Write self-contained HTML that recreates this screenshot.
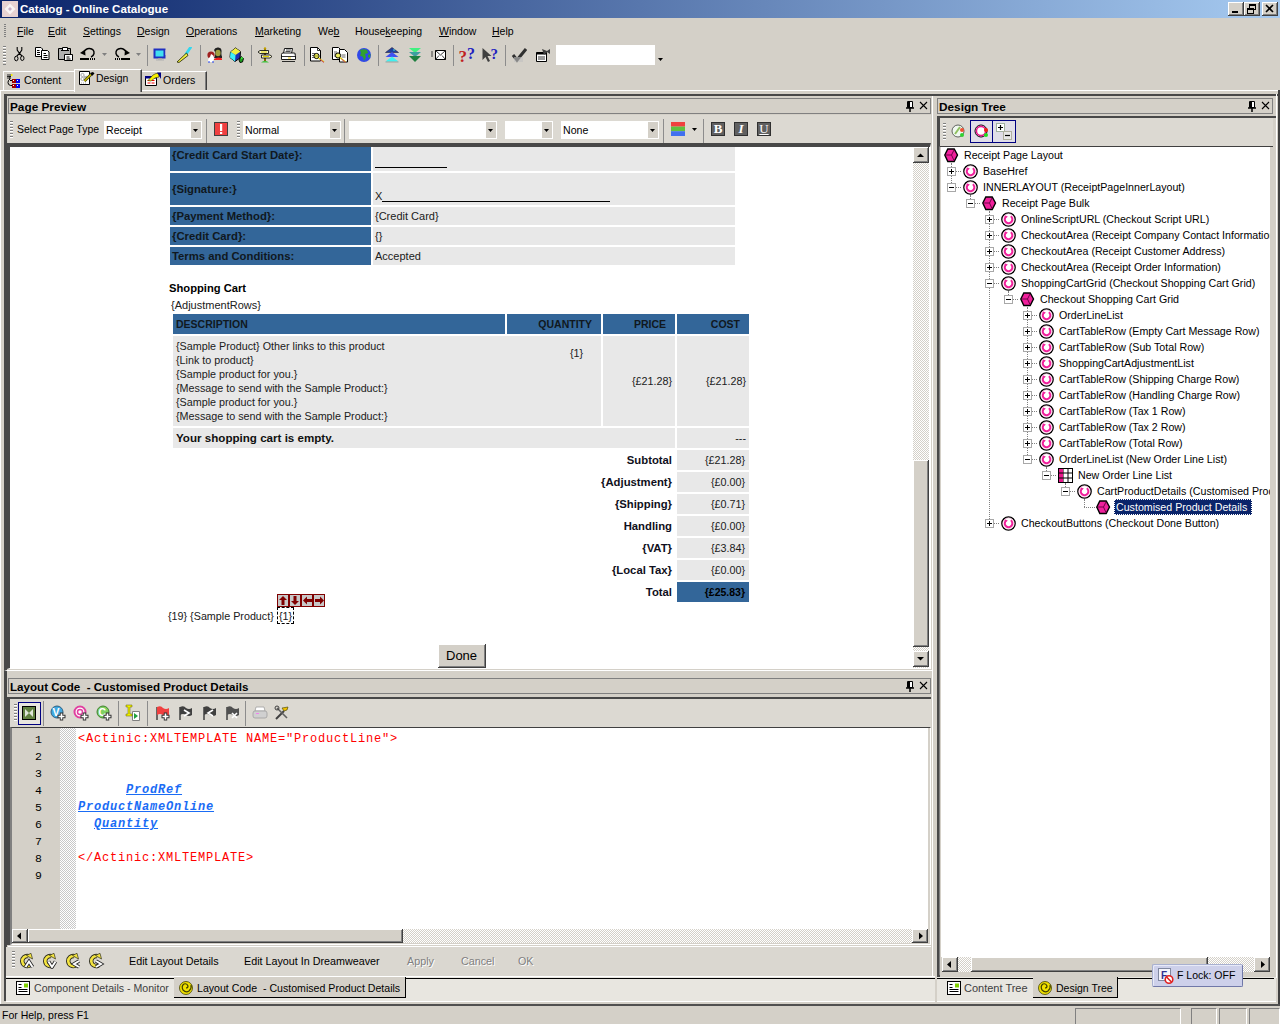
<!DOCTYPE html><html><head><meta charset="utf-8"><style>
html,body{margin:0;padding:0}
body{width:1280px;height:1024px;overflow:hidden;position:relative;background:#D4D0C8;font-family:"Liberation Sans",sans-serif;font-size:11px;color:#000}
div{position:absolute;box-sizing:border-box}
.t{white-space:pre}
u{text-decoration:underline;text-underline-offset:1px;}
.mono{font-family:"Liberation Mono",monospace}
.lk{color:#1A6CF5;font-weight:bold;font-style:italic;text-decoration:underline}
</style></head><body>
<div style="left:0px;top:0px;width:1280px;height:18px;background:linear-gradient(to right,#0A246A,#A6CAF0);"></div><svg style="position:absolute;left:2px;top:1px;" width="16" height="16" viewBox="0 0 16 16"><rect x="0" y="0" width="16" height="16" fill="#E6D2D2"/><path d="M8 2.5 L13.5 8 L8 13.5 L2.5 8Z" fill="#F8F4F4"/><path d="M8 6 L10 8 L8 10 L6 8Z" fill="#C8B0C8"/></svg><div class="t" style="left:20px;top:2px;height:14px;line-height:14px;color:#fff;font-weight:bold;font-size:11.6px;">Catalog - Online Catalogue</div><div style="left:1228px;top:2px;width:16px;height:14px;background:#D4D0C8;box-shadow:inset -1px -1px #404040, inset 1px 1px #FFFFFF, inset -2px -2px #808080, inset 2px 2px #D4D0C8;"><svg style="position:absolute;left:0px;top:0px;" width="16" height="14" viewBox="0 0 16 14"><rect x="4" y="9" width="6" height="2" fill="#000"/></svg></div><div style="left:1244px;top:2px;width:16px;height:14px;background:#D4D0C8;box-shadow:inset -1px -1px #404040, inset 1px 1px #FFFFFF, inset -2px -2px #808080, inset 2px 2px #D4D0C8;"><svg style="position:absolute;left:0px;top:0px;" width="16" height="14" viewBox="0 0 16 14"><rect x="5.5" y="2.5" width="6" height="5" fill="none" stroke="#000"/><rect x="5" y="2" width="7" height="2" fill="#000"/><rect x="3.5" y="6.5" width="6" height="5" fill="#D4D0C8" stroke="#000"/><rect x="3" y="6" width="7" height="2" fill="#000"/></svg></div><div style="left:1262px;top:2px;width:16px;height:14px;background:#D4D0C8;box-shadow:inset -1px -1px #404040, inset 1px 1px #FFFFFF, inset -2px -2px #808080, inset 2px 2px #D4D0C8;"><svg style="position:absolute;left:0px;top:0px;" width="16" height="14" viewBox="0 0 16 14"><path d="M4 3 L11 10 M11 3 L4 10" stroke="#000" stroke-width="1.6"/></svg></div><div style="left:4px;top:24px;width:2px;height:14px;background:repeating-linear-gradient(to bottom,#808080 0 1px,transparent 1px 2px);"></div><div class="t" style="left:17px;top:25px;height:13px;line-height:13px;font-size:10.5px;"><u>F</u>ile</div><div class="t" style="left:48px;top:25px;height:13px;line-height:13px;font-size:10.5px;"><u>E</u>dit</div><div class="t" style="left:83px;top:25px;height:13px;line-height:13px;font-size:10.5px;"><u>S</u>ettings</div><div class="t" style="left:137px;top:25px;height:13px;line-height:13px;font-size:10.5px;"><u>D</u>esign</div><div class="t" style="left:186px;top:25px;height:13px;line-height:13px;font-size:10.5px;"><u>O</u>perations</div><div class="t" style="left:255px;top:25px;height:13px;line-height:13px;font-size:10.5px;"><u>M</u>arketing</div><div class="t" style="left:318px;top:25px;height:13px;line-height:13px;font-size:10.5px;">We<u>b</u></div><div class="t" style="left:355px;top:25px;height:13px;line-height:13px;font-size:10.5px;">House<u>k</u>eeping</div><div class="t" style="left:439px;top:25px;height:13px;line-height:13px;font-size:10.5px;"><u>W</u>indow</div><div class="t" style="left:492px;top:25px;height:13px;line-height:13px;font-size:10.5px;"><u>H</u>elp</div><div style="left:3px;top:46px;width:3px;height:19px;background:repeating-linear-gradient(#808080 0 1px,#fff 1px 2px,#D4D0C8 2px 3px);width:3px"></div><svg style="position:absolute;left:12px;top:47px;" width="16" height="16" viewBox="0 0 16 16"><path d="M5.2 0v3 L7.5 6.5 L4.8 9 M9.8 0v3 L7.5 6.5 L10 9" stroke="#000" stroke-width="1.1" fill="none"/><ellipse cx="4.3" cy="11.5" rx="1.7" ry="2.3" fill="none" stroke="#000" stroke-width="1"/><ellipse cx="10.3" cy="11.2" rx="1.7" ry="2.3" fill="none" stroke="#000" stroke-width="1"/></svg><svg style="position:absolute;left:34px;top:47px;" width="16" height="16" viewBox="0 0 16 16"><path d="M1.5 0.5h5.5l1.5 1.5v7.5h-7z" fill="#fff" stroke="#000"/><path d="M3 3.5h2.5M3 5.5h3M3 7.5h3" stroke="#000"/><path d="M7.5 3.5h6l1.5 1.5v7.5h-7.5z" fill="#fff" stroke="#000"/><path d="M9.5 6.5h2.5M9.5 8.5h4M9.5 10.5h4" stroke="#000"/></svg><svg style="position:absolute;left:57px;top:47px;" width="16" height="16" viewBox="0 0 16 16"><path d="M1.5 1.5h12v11h-12z" fill="#B0B0B0" stroke="#000"/><path d="M5.5 0.5h5v3h-5z" fill="#fff" stroke="#000"/><path d="M4 3.5h8" stroke="#000"/><path d="M7.5 7.5h8v6h-8z" fill="#fff" stroke="#000"/><path d="M9.5 10h3M9.5 12h4" stroke="#000"/></svg><svg style="position:absolute;left:80px;top:47px;" width="16" height="16" viewBox="0 0 16 16"><path d="M3.5 5.5 Q6 1.2 9.5 1.5 Q14.5 2 14 6.5 Q13.5 9 11 10" fill="none" stroke="#000" stroke-width="1.4"/><path d="M0 6 L5 2.5 L5.5 8.5Z" fill="#000"/><rect x="0" y="11" width="9" height="2" fill="#000"/><path d="M10 11h1v2h-1zM12 11h1v2h-1zM14 11h1v2h-1z" fill="#000"/></svg><svg style="position:absolute;left:114px;top:47px;" width="16" height="16" viewBox="0 0 16 16"><path d="M12.5 5.5 Q10 1.2 6.5 1.5 Q1.5 2 2 6.5 Q2.5 9 5 10" fill="none" stroke="#000" stroke-width="1.4"/><path d="M16 6 L11 2.5 L10.5 8.5Z" fill="#000"/><rect x="7" y="11" width="9" height="2" fill="#000"/><path d="M1 11h1v2h-1zM3 11h1v2h-1zM5 11h1v2h-1z" fill="#000"/></svg><svg style="position:absolute;left:153px;top:47px;" width="16" height="16" viewBox="0 0 16 16"><rect x="1.5" y="2.5" width="10" height="8" fill="#40E0F0" stroke="#2030C0" stroke-width="2"/><rect x="5" y="11" width="4" height="1.5" fill="#A0A0A0"/><rect x="3" y="12.5" width="8" height="1" fill="#B0B0B0"/><rect x="12.5" y="3" width="1" height="5" fill="#D0D0D0"/></svg><svg style="position:absolute;left:176px;top:47px;" width="16" height="16" viewBox="0 0 16 16"><path d="M14.5 0.5 L10 7" stroke="#30D8F0" stroke-width="2.8" stroke-linecap="round"/><path d="M10.5 6 L1 15 L3 15.5 L12 8.5Z" fill="#F0F040" stroke="#202000" stroke-width=".8"/></svg><svg style="position:absolute;left:206px;top:47px;" width="16" height="16" viewBox="0 0 16 16"><path d="M8 3 Q9 0 12.5 0.5 Q16 1 15.5 5 Q15 9 17 11 L8 11 Q10 8 9 5Z" fill="#202020"/><ellipse cx="12" cy="6" rx="2.6" ry="3.2" fill="#A0A040"/><path d="M8 12 Q12 9 17 12 L17 13 L8 13Z" fill="#F02020"/><circle cx="5" cy="8" r="3.6" fill="#A02020"/><path d="M5 7 Q8 8 8 11 L7 15 L2 15 Q2 11 4 10Z" fill="#fff"/><path d="M2 15h2M6 15h2" stroke="#2040F0" stroke-width="1.2"/></svg><svg style="position:absolute;left:229px;top:47px;" width="16" height="16" viewBox="0 0 16 16"><path d="M1.5 5 L6.5 1 L11.5 4.5 L11 11 L6 14.5 L1 10.5Z" fill="#2030B0" stroke="#000" stroke-width="1"/><path d="M1.5 5 L6.5 1 L11.5 4.5 L6.5 8Z" fill="#F0F040"/><path d="M1.5 5 L6.5 8 L6 14.5 L1 10.5Z" fill="#40F0F8"/><path d="M12 9.5 L14.5 11.5 L13.5 15 L11 15.5 L10 13Z" fill="#20A020" stroke="#000" stroke-width=".9"/><circle cx="12.8" cy="11" r="1" fill="#40F040"/></svg><svg style="position:absolute;left:257px;top:47px;" width="16" height="16" viewBox="0 0 16 16"><rect x="7" y="1" width="2" height="13" fill="#806000"/><circle cx="8" cy="1.5" r="1.2" fill="#C0A000"/><path d="M1 5 L3 3.5 H11.5 V6.5 H3Z" fill="#F8F8D0" stroke="#000" stroke-width=".8"/><path d="M4 5 h6" stroke="#E0D000" stroke-width="1"/><path d="M15 9.5 L13 8 H4.5 V11 H13Z" fill="#F8F8D0" stroke="#000" stroke-width=".8"/><path d="M6 9.5 h6" stroke="#E0D000" stroke-width="1"/><path d="M4 15.5 Q8 12 12 15.5Z" fill="#40C040"/></svg><svg style="position:absolute;left:280px;top:47px;" width="16" height="16" viewBox="0 0 16 16"><path d="M4.5 1.5h8l-1 5h-8z" fill="#fff" stroke="#000" stroke-width=".9"/><path d="M6 3h5M5.5 4.5h5" stroke="#000" stroke-width=".7"/><path d="M1.5 7.5 Q1.5 6 3 6 H14 Q15.5 6 15.5 7.5 V12.5 H1.5Z" fill="#fff" stroke="#000" stroke-width=".9"/><path d="M1.5 9.5h14M2 14.5h13" stroke="#000" stroke-width=".8"/><rect x="8" y="10.5" width="3" height="1" fill="#F0D000"/><path d="M14 7 L15.5 9" stroke="#808080" stroke-width=".8"/></svg><svg style="position:absolute;left:309px;top:47px;" width="16" height="16" viewBox="0 0 16 16"><path d="M1.5 0.5h7l3 3v10.5h-10z" fill="#fff" stroke="#000"/><path d="M8.5 0.5v3h3" fill="none" stroke="#000" stroke-width=".8"/><path d="M3 6.5h3M3 8.5h2M3 10.5h2" stroke="#404040" stroke-width=".8"/><circle cx="7.5" cy="9" r="2.6" fill="#F0F060" stroke="#000" stroke-width="1"/><path d="M6 9h3" stroke="#808000" stroke-width=".8"/><path d="M9.5 11 L15 15" stroke="#E0D000" stroke-width="1.4"/><path d="M11 12.5 L15 15.5" stroke="#C02080" stroke-width=".8"/></svg><svg style="position:absolute;left:332px;top:47px;" width="16" height="16" viewBox="0 0 16 16"><path d="M0.5 0.5h6l2 2v10h-8z" fill="#fff" stroke="#000"/><path d="M2 5h3M2 7h3M2 9h2" stroke="#404040" stroke-width=".8"/><path d="M7.5 2.5h5l3 3v9.5h-8z" fill="#fff" stroke="#000"/><path d="M9.5 8h4M9.5 10h4" stroke="#404040" stroke-width=".8"/><circle cx="6" cy="8.5" r="2.6" fill="#F0F060" stroke="#000" stroke-width="1"/><path d="M8 10.5 L13.5 15" stroke="#E0D000" stroke-width="1.4"/><path d="M9.5 12 L13.5 15.5" stroke="#C02080" stroke-width=".8"/></svg><svg style="position:absolute;left:356px;top:47px;" width="16" height="16" viewBox="0 0 16 16"><circle cx="8" cy="8" r="7" fill="#3048E8"/><path d="M4 3 Q8 1.5 11 3 L12 6 L9 7 L10 10 L8 14 L7 10 L4 8.5 L5 6Z" fill="#30A030"/><path d="M12 8 L14.5 7 L14 11 L12 10Z" fill="#30A030"/></svg><svg style="position:absolute;left:384px;top:47px;" width="16" height="16" viewBox="0 0 16 16"><path d="M8 0.5 L14.5 5.5 H1.5Z" fill="#2040A0" stroke="#202040" stroke-width=".6"/><circle cx="10" cy="3" r=".8" fill="#40F0F0"/><path d="M8 5 L14.5 10 H1.5Z" fill="#4050F0"/><path d="M8 9.5 L14.5 14.5 H1.5Z" fill="#40F0F0"/><path d="M1.5 15h13" stroke="#808080" stroke-width=".6"/></svg><svg style="position:absolute;left:407px;top:47px;" width="16" height="16" viewBox="0 0 16 16"><path d="M2 1 H14 L8 6Z" fill="#40F080"/><path d="M2 5 H14 L8 10Z" fill="#40A0A0"/><path d="M2 9 H14 L8 15Z" fill="#208040"/></svg><svg style="position:absolute;left:430px;top:47px;" width="16" height="16" viewBox="0 0 16 16"><path d="M5.5 3.5h10v9h-10z" fill="#fff" stroke="#000"/><path d="M5.5 3.5 L10.5 8 L15.5 3.5M5.5 12.5 L9 8.5M15.5 12.5 L12 8.5" stroke="#000" fill="none" stroke-width=".8"/><path d="M1 5h2M1 7h2M1 9h2" stroke="#404040"/></svg><svg style="position:absolute;left:459px;top:47px;" width="16" height="16" viewBox="0 0 16 16"><text x="-0.5" y="15" font-family="Liberation Serif" font-weight="bold" font-size="17" fill="#C02020">?</text><text x="8" y="12" font-family="Liberation Serif" font-weight="bold" font-size="16" fill="#2020C0">?</text></svg><svg style="position:absolute;left:482px;top:47px;" width="16" height="16" viewBox="0 0 16 16"><path d="M0.5 1 L0.5 13 L3.5 10 L6 15 L8 14 L5.5 9 L9.5 9Z" fill="#404040"/><text x="8.5" y="12" font-family="Liberation Serif" font-weight="bold" font-size="15" fill="#2020C0">?</text></svg><svg style="position:absolute;left:511px;top:47px;" width="16" height="16" viewBox="0 0 16 16"><path d="M2 8 L6 13 L15 2" stroke="#303030" stroke-width="3" fill="none"/><rect x="3" y="10" width="9" height="5" fill="#C0C0C0" opacity=".6"/></svg><svg style="position:absolute;left:535px;top:47px;" width="16" height="16" viewBox="0 0 16 16"><path d="M1.5 5.5h10v9h-10z" fill="#fff" stroke="#000"/><path d="M1.5 5.5h10v2h-10z" fill="#000"/><path d="M3 10h7M3 12h7" stroke="#000" stroke-width=".8"/><path d="M7 2 L12 4 L15 2 L15 7 L12 5 L9 8Z" fill="#404040"/></svg><div style="left:147px;top:45px;width:2px;height:21px;border-left:1px solid #8C8C8C;"></div><div style="left:200px;top:45px;width:2px;height:21px;border-left:1px solid #8C8C8C;"></div><div style="left:251px;top:45px;width:2px;height:21px;border-left:1px solid #8C8C8C;"></div><div style="left:304px;top:45px;width:2px;height:21px;border-left:1px solid #8C8C8C;"></div><div style="left:378px;top:45px;width:2px;height:21px;border-left:1px solid #8C8C8C;"></div><div style="left:453px;top:45px;width:2px;height:21px;border-left:1px solid #8C8C8C;"></div><div style="left:505px;top:45px;width:2px;height:21px;border-left:1px solid #8C8C8C;"></div><svg style="position:absolute;left:102px;top:53px;" width="5" height="3" viewBox="0 0 5 3"><path d="M0 0h5L2.5 3z" fill="#808080"/></svg><svg style="position:absolute;left:136px;top:53px;" width="5" height="3" viewBox="0 0 5 3"><path d="M0 0h5L2.5 3z" fill="#808080"/></svg><div style="left:556px;top:45px;width:99px;height:20px;background:#fff;"></div><svg style="position:absolute;left:658px;top:58px;" width="5" height="3" viewBox="0 0 5 3"><path d="M0 0h5L2.5 3z" fill="#000"/></svg><div style="left:3px;top:71px;width:71px;height:20px;border-left:1px solid #fff;border-top:1px solid #fff;"></div><div style="left:0px;top:90px;width:74px;height:1px;background:#fff;"></div><svg style="position:absolute;left:6px;top:73px;" width="17" height="16" viewBox="0 0 17 16"><path d="M1 2h4M1 3.5h4M1 5h3" stroke="#000" stroke-width=".8"/><path d="M4 3 V6 Q2 7 2 9.5 Q2 12 4.5 12.5 H8 M4 7.5 H8" stroke="#000" fill="none" stroke-width="1"/><rect x="6" y="6" width="4" height="4" fill="#A00000"/><rect x="10" y="6" width="4" height="4" fill="#0000F0"/><rect x="6" y="11" width="4" height="4" fill="#A00000"/><rect x="10" y="11" width="4" height="4" fill="#0000F0"/><rect x="7" y="7" width="1" height="1" fill="#fff"/><rect x="11" y="7" width="1" height="1" fill="#fff"/><rect x="7" y="12" width="1" height="1" fill="#fff"/><rect x="11" y="12" width="1" height="1" fill="#fff"/><rect x="5" y="1" width="1.5" height="2" fill="#F0F000"/></svg><div class="t" style="left:24px;top:74px;height:13px;line-height:13px;font-size:10.6px;">Content</div><div style="left:74px;top:69px;width:68px;height:23px;border-left:1px solid #fff;border-top:1px solid #fff;border-right:1px solid #404040;box-shadow:inset -1px 0 #808080;"></div><svg style="position:absolute;left:79px;top:71px;" width="16" height="15" viewBox="0 0 16 15"><path d="M.5 .5h10v13h-10z" fill="#fff" stroke="#000"/><circle cx="3.5" cy="4" r="1.6" fill="none" stroke="#909090" stroke-width=".8"/><circle cx="3.5" cy="8" r="1.6" fill="none" stroke="#909090" stroke-width=".8"/><path d="M5 5 L8 7 M5 7 L8 5" stroke="#909090" stroke-width=".8"/><path d="M2 12h6" stroke="#909090" stroke-width=".8" stroke-dasharray="1 1"/><path d="M5.5 10 L12 3.5" stroke="#404000" stroke-width="2.6"/><path d="M5.5 10 L12 3.5" stroke="#D0C000" stroke-width="1.2"/><path d="M11 2 L14 1 L15.5 2.5 L13 5Z" fill="#000"/></svg><div class="t" style="left:96px;top:72px;height:13px;line-height:13px;font-size:10.4px;">Design</div><div style="left:142px;top:71px;width:65px;height:20px;border-top:1px solid #fff;border-right:1px solid #404040;box-shadow:inset -1px 0 #808080;"></div><div style="left:142px;top:90px;width:1138px;height:1px;background:#fff;"></div><svg style="position:absolute;left:145px;top:72px;" width="17" height="16" viewBox="0 0 17 16"><path d="M.5 5.5h11v8h-11z" fill="#fff" stroke="#000"/><path d="M0 4h12v2.5H0z" fill="#000080"/><path d="M2.5 8h3v1H2.5zM6.5 8h3v1H6.5zM2.5 10.5h3v1H2.5zM6.5 10.5h3v1H6.5z" fill="#F00000"/><path d="M3 8.5 L8 3 L11 1.5 L14 1.5 L14 5 L10 6 L6 9Z" fill="#F8F000" stroke="#303000" stroke-width=".6"/><path d="M12 0.5 L16 0.5 L16 7 Z" fill="#000080"/></svg><div class="t" style="left:163px;top:74px;height:13px;line-height:13px;font-size:10.6px;">Orders</div><div style="left:4px;top:94px;width:929px;height:577px;border-left:3px solid #484848;border-right:1px solid #fff;"></div><div style="left:0px;top:90px;width:1px;height:914px;background:#fff;"></div><div style="left:4px;top:94px;width:1274px;height:2px;background:#484848;"></div><div style="left:8px;top:98px;width:923px;height:16px;border:1px solid #808080;"></div><div class="t" style="left:10px;top:100px;height:14px;line-height:14px;font-weight:bold;font-size:11.8px;">Page Preview</div><svg style="position:absolute;left:905px;top:100px;" width="10" height="12" viewBox="0 0 10 12"><path d="M2.5 1.5h5v6h-5z" fill="#fff" stroke="#000"/><path d="M1 8h8" stroke="#000" stroke-width="1.5"/><path d="M5 8v4" stroke="#000" stroke-width="1.5"/><path d="M3 1h2v6H3z" fill="#000"/></svg><svg style="position:absolute;left:919px;top:101px;" width="9" height="9" viewBox="0 0 9 9"><path d="M1 1L8 8M8 1L1 8" stroke="#000" stroke-width="1.1"/></svg><div style="left:8px;top:115px;width:923px;height:29px;background:#DCD9D2;"></div><div style="left:10px;top:121px;width:3px;height:17px;background:repeating-linear-gradient(to bottom,#808080 0 1px,#fff 1px 2px,transparent 2px 3px);"></div><div class="t" style="left:17px;top:123px;height:13px;line-height:13px;font-size:10.5px;">Select Page Type</div><div style="left:104px;top:121px;width:98px;height:18px;background:#fff;"></div><div style="left:191px;top:122px;width:10px;height:16px;background:#D4D0C8;"></div><svg style="position:absolute;left:193px;top:129px;" width="5" height="3" viewBox="0 0 5 3"><path d="M0 0h5L2.5 3z" fill="#000"/></svg><div class="t" style="left:106px;top:123px;height:14px;line-height:14px;font-size:10.6px;">Receipt</div><div style="left:206px;top:119px;width:2px;height:24px;border-left:1px solid #8C8C8C;"></div><svg style="position:absolute;left:214px;top:122px;" width="14" height="14" viewBox="0 0 14 14"><rect x=".5" y=".5" width="13" height="13" fill="#F04040" stroke="#404040"/><rect x="6" y="2" width="2.2" height="7" fill="#fff"/><rect x="6" y="10" width="2.2" height="2" fill="#fff"/></svg><div style="left:237px;top:121px;width:3px;height:17px;background:repeating-linear-gradient(to bottom,#808080 0 1px,#fff 1px 2px,transparent 2px 3px);"></div><div style="left:243px;top:121px;width:98px;height:18px;background:#fff;"></div><div style="left:330px;top:122px;width:10px;height:16px;background:#D4D0C8;"></div><svg style="position:absolute;left:332px;top:129px;" width="5" height="3" viewBox="0 0 5 3"><path d="M0 0h5L2.5 3z" fill="#000"/></svg><div class="t" style="left:245px;top:123px;height:14px;line-height:14px;font-size:10.6px;">Normal</div><div style="left:344px;top:119px;width:2px;height:24px;border-left:1px solid #8C8C8C;"></div><div style="left:349px;top:121px;width:148px;height:18px;background:#fff;"></div><div style="left:486px;top:122px;width:10px;height:16px;background:#D4D0C8;"></div><svg style="position:absolute;left:488px;top:129px;" width="5" height="3" viewBox="0 0 5 3"><path d="M0 0h5L2.5 3z" fill="#000"/></svg><div style="left:505px;top:121px;width:48px;height:18px;background:#fff;"></div><div style="left:542px;top:122px;width:10px;height:16px;background:#D4D0C8;"></div><svg style="position:absolute;left:544px;top:129px;" width="5" height="3" viewBox="0 0 5 3"><path d="M0 0h5L2.5 3z" fill="#000"/></svg><div style="left:561px;top:121px;width:98px;height:18px;background:#fff;"></div><div style="left:648px;top:122px;width:10px;height:16px;background:#D4D0C8;"></div><svg style="position:absolute;left:650px;top:129px;" width="5" height="3" viewBox="0 0 5 3"><path d="M0 0h5L2.5 3z" fill="#000"/></svg><div class="t" style="left:563px;top:123px;height:14px;line-height:14px;font-size:10.6px;">None</div><div style="left:663px;top:119px;width:2px;height:24px;border-left:1px solid #8C8C8C;"></div><svg style="position:absolute;left:671px;top:122px;" width="14" height="14" viewBox="0 0 14 14"><rect x="0" y="0" width="14" height="4.6" fill="#F04040"/><rect x="0" y="4.6" width="14" height="4.6" fill="#60C040"/><rect x="0" y="9.2" width="14" height="4.8" fill="#4070F0"/></svg><svg style="position:absolute;left:692px;top:128px;" width="5" height="3" viewBox="0 0 5 3"><path d="M0 0h5L2.5 3z" fill="#000"/></svg><div style="left:703px;top:119px;width:2px;height:24px;border-left:1px solid #8C8C8C;"></div><div style="left:711px;top:122px;width:14px;height:14px;background:#606060;border:1px solid #303030;"></div><div class="t" style="left:711px;top:121px;width:14px;height:15px;line-height:15px;text-align:center;font-family:Liberation Serif;font-size:13px;color:#fff;font-weight:bold;">B</div><div style="left:734px;top:122px;width:14px;height:14px;background:#606060;border:1px solid #303030;"></div><div class="t" style="left:734px;top:121px;width:14px;height:15px;line-height:15px;text-align:center;font-family:Liberation Serif;font-size:13px;color:#fff;font-style:italic;font-weight:bold;">I</div><div style="left:757px;top:122px;width:14px;height:14px;background:#606060;border:1px solid #303030;"></div><div class="t" style="left:757px;top:121px;width:14px;height:15px;line-height:15px;text-align:center;font-family:Liberation Serif;font-size:13px;color:#fff;text-decoration:underline;">U</div><div style="left:7px;top:143px;width:924px;height:526px;background:#fff;border-top:4px solid #484848;border-left:3px solid #484848;border-right:1px solid #fff;border-bottom:1px solid #fff;"></div><div style="left:10px;top:147px;width:903px;height:521px;overflow:hidden;"><div style="left:-10px;top:-147px;width:1280px;height:1024px;"><div style="left:170px;top:140px;width:201px;height:31px;background:#336699;"></div><div style="left:373px;top:140px;width:362px;height:31px;background:#E8E8E8;"></div><div class="t" style="left:172px;top:148px;height:14px;line-height:14px;font-weight:bold;font-size:11.3px;color:#101820;">{Credit Card Start Date}:</div><div style="left:170px;top:173px;width:201px;height:32px;background:#336699;"></div><div style="left:373px;top:173px;width:362px;height:32px;background:#E8E8E8;"></div><div class="t" style="left:172px;top:182px;height:14px;line-height:14px;font-weight:bold;font-size:11.3px;color:#101820;">{Signature:}</div><div style="left:170px;top:207px;width:201px;height:18px;background:#336699;"></div><div style="left:373px;top:207px;width:362px;height:18px;background:#E8E8E8;"></div><div class="t" style="left:172px;top:209px;height:14px;line-height:14px;font-weight:bold;font-size:11.3px;color:#101820;">{Payment Method}:</div><div class="t" style="left:375px;top:209px;height:14px;line-height:14px;font-size:11px;color:#202020;">{Credit Card}</div><div style="left:170px;top:227px;width:201px;height:18px;background:#336699;"></div><div style="left:373px;top:227px;width:362px;height:18px;background:#E8E8E8;"></div><div class="t" style="left:172px;top:229px;height:14px;line-height:14px;font-weight:bold;font-size:11.3px;color:#101820;">{Credit Card}:</div><div class="t" style="left:375px;top:229px;height:14px;line-height:14px;font-size:11px;color:#202020;">{}</div><div style="left:170px;top:247px;width:201px;height:18px;background:#336699;"></div><div style="left:373px;top:247px;width:362px;height:18px;background:#E8E8E8;"></div><div class="t" style="left:172px;top:249px;height:14px;line-height:14px;font-weight:bold;font-size:11.3px;color:#101820;">Terms and Conditions:</div><div class="t" style="left:375px;top:249px;height:14px;line-height:14px;font-size:11px;color:#202020;">Accepted</div><div style="left:375px;top:167px;width:72px;height:1px;background:#000;"></div><div class="t" style="left:375px;top:189px;height:14px;line-height:14px;font-size:11px;color:#202020;">X</div><div style="left:382px;top:201px;width:228px;height:1px;background:#000;"></div><div class="t" style="left:169px;top:281px;height:14px;line-height:14px;font-size:11.2px;font-weight:bold;color:#000;">Shopping Cart</div><div class="t" style="left:171px;top:298px;height:14px;line-height:14px;font-size:11px;color:#202020;">{AdjustmentRows}</div><div style="left:173px;top:314px;width:332px;height:20px;background:#336699;"></div><div class="t" style="left:176px;top:317px;height:14px;line-height:14px;font-weight:bold;font-size:10.5px;color:#101820;">DESCRIPTION</div><div style="left:507px;top:314px;width:94px;height:20px;background:#336699;"></div><div class="t" style="left:507px;top:317px;width:85px;height:14px;line-height:14px;text-align:right;font-weight:bold;font-size:10.5px;color:#101820;">QUANTITY</div><div style="left:603px;top:314px;width:72px;height:20px;background:#336699;"></div><div class="t" style="left:603px;top:317px;width:63px;height:14px;line-height:14px;text-align:right;font-weight:bold;font-size:10.5px;color:#101820;">PRICE</div><div style="left:677px;top:314px;width:72px;height:20px;background:#336699;"></div><div class="t" style="left:677px;top:317px;width:63px;height:14px;line-height:14px;text-align:right;font-weight:bold;font-size:10.5px;color:#101820;">COST</div><div style="left:173px;top:336px;width:428px;height:90px;background:#E8E8E8;"></div><div style="left:603px;top:336px;width:72px;height:90px;background:#E8E8E8;"></div><div style="left:677px;top:336px;width:72px;height:90px;background:#E8E8E8;"></div><div class="t" style="left:176px;top:339px;height:14px;line-height:14px;font-size:10.75px;color:#202020;">{Sample Product} Other links to this product</div><div class="t" style="left:176px;top:353px;height:14px;line-height:14px;font-size:10.75px;color:#202020;">{Link to product}</div><div class="t" style="left:176px;top:367px;height:14px;line-height:14px;font-size:10.75px;color:#202020;">{Sample product for you.}</div><div class="t" style="left:176px;top:381px;height:14px;line-height:14px;font-size:10.75px;color:#202020;">{Message to send with the Sample Product:}</div><div class="t" style="left:176px;top:395px;height:14px;line-height:14px;font-size:10.75px;color:#202020;">{Sample product for you.}</div><div class="t" style="left:176px;top:409px;height:14px;line-height:14px;font-size:10.75px;color:#202020;">{Message to send with the Sample Product:}</div><div class="t" style="left:570px;top:346px;height:14px;line-height:14px;font-size:10.75px;color:#202020;">{1}</div><div class="t" style="left:603px;top:374px;width:69px;height:14px;line-height:14px;text-align:right;font-size:10.75px;color:#202020;">{£21.28}</div><div class="t" style="left:677px;top:374px;width:69px;height:14px;line-height:14px;text-align:right;font-size:10.75px;color:#202020;">{£21.28}</div><div style="left:173px;top:428px;width:502px;height:20px;background:#E8E8E8;"></div><div style="left:677px;top:428px;width:72px;height:20px;background:#E8E8E8;"></div><div class="t" style="left:176px;top:431px;height:14px;line-height:14px;font-weight:bold;font-size:11.6px;color:#101010;">Your shopping cart is empty.</div><div class="t" style="left:677px;top:431px;width:69px;height:14px;line-height:14px;text-align:right;font-size:10.75px;color:#202020;">---</div><div style="left:677px;top:450px;width:72px;height:20px;background:#E8E8E8;"></div><div class="t" style="left:400px;top:453px;width:272px;height:14px;line-height:14px;text-align:right;font-weight:bold;font-size:11.3px;color:#101020;">Subtotal</div><div class="t" style="left:677px;top:453px;width:68px;height:14px;line-height:14px;text-align:right;font-size:10.75px;color:#202020;">{£21.28}</div><div style="left:677px;top:472px;width:72px;height:20px;background:#E8E8E8;"></div><div class="t" style="left:400px;top:475px;width:272px;height:14px;line-height:14px;text-align:right;font-weight:bold;font-size:11.3px;color:#101020;">{Adjustment}</div><div class="t" style="left:677px;top:475px;width:68px;height:14px;line-height:14px;text-align:right;font-size:10.75px;color:#202020;">{£0.00}</div><div style="left:677px;top:494px;width:72px;height:20px;background:#E8E8E8;"></div><div class="t" style="left:400px;top:497px;width:272px;height:14px;line-height:14px;text-align:right;font-weight:bold;font-size:11.3px;color:#101020;">{Shipping}</div><div class="t" style="left:677px;top:497px;width:68px;height:14px;line-height:14px;text-align:right;font-size:10.75px;color:#202020;">{£0.71}</div><div style="left:677px;top:516px;width:72px;height:20px;background:#E8E8E8;"></div><div class="t" style="left:400px;top:519px;width:272px;height:14px;line-height:14px;text-align:right;font-weight:bold;font-size:11.3px;color:#101020;">Handling</div><div class="t" style="left:677px;top:519px;width:68px;height:14px;line-height:14px;text-align:right;font-size:10.75px;color:#202020;">{£0.00}</div><div style="left:677px;top:538px;width:72px;height:20px;background:#E8E8E8;"></div><div class="t" style="left:400px;top:541px;width:272px;height:14px;line-height:14px;text-align:right;font-weight:bold;font-size:11.3px;color:#101020;">{VAT}</div><div class="t" style="left:677px;top:541px;width:68px;height:14px;line-height:14px;text-align:right;font-size:10.75px;color:#202020;">{£3.84}</div><div style="left:677px;top:560px;width:72px;height:20px;background:#E8E8E8;"></div><div class="t" style="left:400px;top:563px;width:272px;height:14px;line-height:14px;text-align:right;font-weight:bold;font-size:11.3px;color:#101020;">{Local Tax}</div><div class="t" style="left:677px;top:563px;width:68px;height:14px;line-height:14px;text-align:right;font-size:10.75px;color:#202020;">{£0.00}</div><div style="left:677px;top:582px;width:72px;height:20px;background:#336699;"></div><div class="t" style="left:400px;top:585px;width:272px;height:14px;line-height:14px;text-align:right;font-weight:bold;font-size:11.3px;color:#101020;">Total</div><div class="t" style="left:677px;top:585px;width:68px;height:14px;line-height:14px;text-align:right;font-weight:bold;font-size:10.5px;color:#000;">{£25.83}</div><div style="left:277px;top:594px;width:12px;height:13px;background:#800000;"></div><div style="left:278px;top:595px;width:10px;height:11px;background:#C8C8C8;"></div><svg style="position:absolute;left:277px;top:594px;" width="12" height="13" viewBox="0 0 12 13"><path d="M6 2L10 6H7.5V11H4.5V6H2Z" fill="#800000"/></svg><div style="left:289px;top:594px;width:12px;height:13px;background:#800000;"></div><div style="left:290px;top:595px;width:10px;height:11px;background:#C8C8C8;"></div><svg style="position:absolute;left:289px;top:594px;" width="12" height="13" viewBox="0 0 12 13"><path d="M6 11L10 7H7.5V2H4.5V7H2Z" fill="#800000"/></svg><div style="left:301px;top:594px;width:12px;height:13px;background:#800000;"></div><div style="left:302px;top:595px;width:10px;height:11px;background:#C8C8C8;"></div><svg style="position:absolute;left:301px;top:594px;" width="12" height="13" viewBox="0 0 12 13"><path d="M2 6.5L6 2.5V5H11V8H6V10.5Z" fill="#800000"/></svg><div style="left:313px;top:594px;width:12px;height:13px;background:#800000;"></div><div style="left:314px;top:595px;width:10px;height:11px;background:#C8C8C8;"></div><svg style="position:absolute;left:313px;top:594px;" width="12" height="13" viewBox="0 0 12 13"><path d="M11 6.5L7 2.5V5H2V8H7V10.5Z" fill="#800000"/></svg><div class="t" style="left:168px;top:609px;height:14px;line-height:14px;font-size:10.75px;color:#202020;">{19} {Sample Product} </div><div style="left:277px;top:607px;width:17px;height:17px;border:1px dashed #000;"></div><div class="t" style="left:279px;top:609px;height:14px;line-height:14px;font-size:10.75px;color:#202020;">{1}</div><div style="left:438px;top:644px;width:48px;height:24px;background:#D4D0C8;box-shadow:inset -1px -1px #404040, inset 1px 1px #FFFFFF, inset -2px -2px #808080, inset 2px 2px #D4D0C8;"><div class="t" style="left:8px;top:4px;height:16px;line-height:16px;font-size:13px;color:#000;">Done</div></div></div></div><div style="left:913px;top:147px;width:16px;height:521px;background:repeating-conic-gradient(#fff 0 25%,#D4D0C8 0 50%) 0 0/2px 2px;"></div><div style="left:913px;top:147px;width:16px;height:16px;background:#D4D0C8;box-shadow:inset -1px -1px #404040, inset 1px 1px #FFFFFF, inset -2px -2px #808080, inset 2px 2px #D4D0C8;"><svg style="position:absolute;left:0px;top:0px;" width="16" height="16" viewBox="0 0 16 16"><path d="M4 10h7L7.5 6.5z" fill="#000"/></svg></div><div style="left:913px;top:460px;width:16px;height:187px;background:#D4D0C8;box-shadow:inset -1px -1px #404040, inset 1px 1px #FFFFFF, inset -2px -2px #808080, inset 2px 2px #D4D0C8;"></div><div style="left:913px;top:651px;width:16px;height:16px;background:#D4D0C8;box-shadow:inset -1px -1px #404040, inset 1px 1px #FFFFFF, inset -2px -2px #808080, inset 2px 2px #D4D0C8;"><svg style="position:absolute;left:0px;top:0px;" width="16" height="16" viewBox="0 0 16 16"><path d="M4 6h7L7.5 9.5z" fill="#000"/></svg></div><div style="left:4px;top:670px;width:929px;height:307px;border-top:1px solid #fff;border-left:3px solid #484848;border-right:1px solid #fff;"></div><div style="left:8px;top:678px;width:923px;height:16px;border:1px solid #808080;"></div><div class="t" style="left:10px;top:680px;height:14px;line-height:14px;font-weight:bold;font-size:11.6px;">Layout Code  - Customised Product Details</div><svg style="position:absolute;left:905px;top:680px;" width="10" height="12" viewBox="0 0 10 12"><path d="M2.5 1.5h5v6h-5z" fill="#fff" stroke="#000"/><path d="M1 8h8" stroke="#000" stroke-width="1.5"/><path d="M5 8v4" stroke="#000" stroke-width="1.5"/><path d="M3 1h2v6H3z" fill="#000"/></svg><svg style="position:absolute;left:919px;top:681px;" width="9" height="9" viewBox="0 0 9 9"><path d="M1 1L8 8M8 1L1 8" stroke="#000" stroke-width="1.1"/></svg><div style="left:7px;top:697px;width:924px;height:248px;border-top:2px solid #484848;border-left:3px solid #484848;"></div><div style="left:10px;top:699px;width:921px;height:28px;background:#DCD9D2;"></div><div style="left:14px;top:704px;width:3px;height:17px;background:repeating-linear-gradient(to bottom,#808080 0 1px,#fff 1px 2px,transparent 2px 3px);"></div><div style="left:18px;top:702px;width:23px;height:23px;border:1px solid #000080;background:#E8E6E0;"></div><svg style="position:absolute;left:22px;top:706px;" width="14" height="14" viewBox="0 0 14 14"><rect x=".5" y=".5" width="13" height="13" fill="#608040" stroke="#000"/><path d="M3 3 L7 7 L3 11Z M11 3 L7 7 L11 11Z" fill="#fff" opacity=".8"/></svg><div style="left:43px;top:701px;width:2px;height:25px;border-left:1px solid #8C8C8C;"></div><svg style="position:absolute;left:50px;top:705px;" width="16" height="16" viewBox="0 0 16 16"><circle cx="7" cy="7" r="6" fill="#40A8E0" stroke="#306080" stroke-width="1"/><text x="2.5" y="11" font-size="10.5" font-weight="bold" fill="#fff" font-family="Liberation Sans">V</text><path d="M11.5 7.5v8M7.5 11.5h8" stroke="#303030" stroke-width="3.4"/><path d="M11.5 8.5v6M8.5 11.5h6" stroke="#fff" stroke-width="1.6"/></svg><svg style="position:absolute;left:73px;top:705px;" width="16" height="16" viewBox="0 0 16 16"><circle cx="7" cy="7" r="5.5" fill="#fff" stroke="#E040A0" stroke-width="2"/><circle cx="7" cy="7" r="2.5" fill="none" stroke="#E040A0" stroke-width="1.5"/><path d="M11.5 7.5v8M7.5 11.5h8" stroke="#303030" stroke-width="3.4"/><path d="M11.5 8.5v6M8.5 11.5h6" stroke="#fff" stroke-width="1.6"/></svg><svg style="position:absolute;left:96px;top:705px;" width="16" height="16" viewBox="0 0 16 16"><circle cx="7" cy="7" r="6" fill="#80D060" stroke="#408030" stroke-width="1"/><text x="2.5" y="11" font-size="10.5" font-weight="bold" fill="#fff" font-family="Liberation Sans">C</text><path d="M11.5 7.5v8M7.5 11.5h8" stroke="#303030" stroke-width="3.4"/><path d="M11.5 8.5v6M8.5 11.5h6" stroke="#fff" stroke-width="1.6"/></svg><div style="left:118px;top:701px;width:2px;height:25px;border-left:1px solid #8C8C8C;"></div><svg style="position:absolute;left:125px;top:704px;" width="16" height="18" viewBox="0 0 16 18"><path d="M7.5 7.5h7v9h-7z" fill="#fff" stroke="#808080"/><path d="M1 1h6v2H5v7h2v2H1v-2h2V3H1z" fill="#F0F000" stroke="#606000" stroke-width=".5"/><path d="M9 9l4 3-4 3z" fill="#20A040"/></svg><div style="left:147px;top:701px;width:2px;height:25px;border-left:1px solid #8C8C8C;"></div><svg style="position:absolute;left:154px;top:705px;" width="16" height="16" viewBox="0 0 16 16"><path d="M3 2 L3 15" stroke="#404040" stroke-width="1.5"/><path d="M3 2 Q7 0 9 3 Q12 5 15 3 L15 10 Q12 12 9 10 Q6 8 3 10Z" fill="#F04040"/><path d="M11.5 7.5v8M7.5 11.5h8" stroke="#303030" stroke-width="3.4"/><path d="M11.5 8.5v6M8.5 11.5h6" stroke="#fff" stroke-width="1.6"/></svg><svg style="position:absolute;left:177px;top:705px;" width="16" height="16" viewBox="0 0 16 16"><path d="M3 2 L3 15" stroke="#404040" stroke-width="1.5"/><path d="M3 2 Q7 0 9 3 Q12 5 15 3 L15 10 Q12 12 9 10 Q6 8 3 10Z" fill="#404040"/><path d="M7 5 L12 8 L7 11" stroke="#fff" stroke-width="1.6" fill="none"/></svg><svg style="position:absolute;left:201px;top:705px;" width="16" height="16" viewBox="0 0 16 16"><path d="M3 2 L3 15" stroke="#404040" stroke-width="1.5"/><path d="M3 2 Q7 0 9 3 Q12 5 15 3 L15 10 Q12 12 9 10 Q6 8 3 10Z" fill="#404040"/><path d="M12 5 L7 8 L12 11" stroke="#fff" stroke-width="1.6" fill="none"/></svg><svg style="position:absolute;left:224px;top:705px;" width="16" height="16" viewBox="0 0 16 16"><path d="M3 2 L3 15" stroke="#404040" stroke-width="1.5"/><path d="M3 2 Q7 0 9 3 Q12 5 15 3 L15 10 Q12 12 9 10 Q6 8 3 10Z" fill="#505050"/><path d="M8 8 L13 13 M13 8 L8 13" stroke="#fff" stroke-width="1.6"/></svg><div style="left:245px;top:701px;width:2px;height:25px;border-left:1px solid #8C8C8C;"></div><svg style="position:absolute;left:252px;top:705px;" width="16" height="16" viewBox="0 0 16 16"><path d="M4 2h8l1 4H3z" fill="#fff" stroke="#A0A0A0" stroke-width=".8"/><rect x="1" y="6" width="14" height="7" rx="2" fill="#D0D0D0" stroke="#A0A0A0" stroke-width=".8"/><rect x="4" y="8" width="3" height="1" fill="#F080F0"/></svg><svg style="position:absolute;left:274px;top:705px;" width="16" height="16" viewBox="0 0 16 16"><path d="M2 14 L10 6" stroke="#404040" stroke-width="2"/><path d="M8 3 L14 2 L13 5 L10 6Z" fill="#F0C000" stroke="#404000" stroke-width=".6"/><path d="M3 3 L13 13" stroke="#606060" stroke-width="1.6"/><circle cx="3" cy="3" r="2" fill="none" stroke="#404040"/></svg><div style="left:10px;top:727px;width:921px;height:218px;border-top:1px solid #404040;border-left:2px solid #808080;border-right:1px solid #fff;border-bottom:1px solid #fff;"></div><div style="left:12px;top:728px;width:48px;height:201px;background:#D4D0C8;"></div><div style="left:60px;top:728px;width:16px;height:201px;background:repeating-conic-gradient(#fff 0 25%,#C8C8C8 0 50%) 0 0/2px 2px;"></div><div style="left:76px;top:728px;width:852px;height:201px;background:#fff;"></div><div class="t mono" style="left:17px;top:731px;width:25px;height:17px;line-height:17px;text-align:right;font-size:11.5px;color:#000;">1</div><div class="t mono" style="left:78px;top:731px;height:17px;line-height:17px;font-size:12px;letter-spacing:0.8px;"><span style="color:#FF0000">&lt;Actinic:XMLTEMPLATE NAME="ProductLine"&gt;</span></div><div class="t mono" style="left:17px;top:748px;width:25px;height:17px;line-height:17px;text-align:right;font-size:11.5px;color:#000;">2</div><div class="t mono" style="left:17px;top:765px;width:25px;height:17px;line-height:17px;text-align:right;font-size:11.5px;color:#000;">3</div><div class="t mono" style="left:17px;top:782px;width:25px;height:17px;line-height:17px;text-align:right;font-size:11.5px;color:#000;">4</div><div class="t mono" style="left:78px;top:782px;height:17px;line-height:17px;font-size:12px;letter-spacing:0.8px;">      <span class="lk">ProdRef</span></div><div class="t mono" style="left:17px;top:799px;width:25px;height:17px;line-height:17px;text-align:right;font-size:11.5px;color:#000;">5</div><div class="t mono" style="left:78px;top:799px;height:17px;line-height:17px;font-size:12px;letter-spacing:0.8px;"><span class="lk">ProductNameOnline</span></div><div class="t mono" style="left:17px;top:816px;width:25px;height:17px;line-height:17px;text-align:right;font-size:11.5px;color:#000;">6</div><div class="t mono" style="left:78px;top:816px;height:17px;line-height:17px;font-size:12px;letter-spacing:0.8px;">  <span class="lk">Quantity</span></div><div class="t mono" style="left:17px;top:833px;width:25px;height:17px;line-height:17px;text-align:right;font-size:11.5px;color:#000;">7</div><div class="t mono" style="left:17px;top:850px;width:25px;height:17px;line-height:17px;text-align:right;font-size:11.5px;color:#000;">8</div><div class="t mono" style="left:78px;top:850px;height:17px;line-height:17px;font-size:12px;letter-spacing:0.8px;"><span style="color:#FF0000">&lt;/Actinic:XMLTEMPLATE&gt;</span></div><div class="t mono" style="left:17px;top:867px;width:25px;height:17px;line-height:17px;text-align:right;font-size:11.5px;color:#000;">9</div><div style="left:12px;top:929px;width:916px;height:14px;background:repeating-conic-gradient(#fff 0 25%,#D4D0C8 0 50%) 0 0/2px 2px;"></div><div style="left:12px;top:929px;width:16px;height:14px;background:#D4D0C8;box-shadow:inset -1px -1px #404040, inset 1px 1px #FFFFFF, inset -2px -2px #808080, inset 2px 2px #D4D0C8;"><svg style="position:absolute;left:0px;top:0px;" width="16" height="14" viewBox="0 0 16 14"><path d="M5 7L9 3.5V10.5z" fill="#000"/></svg></div><div style="left:28px;top:929px;width:375px;height:14px;background:#D4D0C8;box-shadow:inset -1px -1px #404040, inset 1px 1px #FFFFFF, inset -2px -2px #808080, inset 2px 2px #D4D0C8;"></div><div style="left:912px;top:929px;width:16px;height:14px;background:#D4D0C8;box-shadow:inset -1px -1px #404040, inset 1px 1px #FFFFFF, inset -2px -2px #808080, inset 2px 2px #D4D0C8;"><svg style="position:absolute;left:0px;top:0px;" width="16" height="14" viewBox="0 0 16 14"><path d="M11 7L7 3.5V10.5z" fill="#000"/></svg></div><div style="left:6px;top:947px;width:925px;height:29px;background:#DAD7D0;"></div><div style="left:8px;top:946px;width:923px;height:1px;background:#fff;"></div><div style="left:12px;top:951px;width:3px;height:18px;background:repeating-linear-gradient(to bottom,#808080 0 1px,#fff 1px 2px,transparent 2px 3px);"></div><svg style="position:absolute;left:20px;top:953px;" width="16" height="16" viewBox="0 0 16 16"><path d="M8.5 3.2 A5 5 0 1 0 9.5 12.5" stroke="#303020" stroke-width="4.4" fill="none"/><path d="M8.5 3.2 A5 5 0 1 0 9.5 12.5" stroke="#F4E440" stroke-width="2.6" fill="none"/><path d="M6.5 2.5 L11 0.3 L12.5 6Z" fill="#F4E440" stroke="#303020" stroke-width=".7"/><path d="M5.5 14 L9 8.5 L12.5 14" stroke="#202020" stroke-width="3.6" fill="none"/><path d="M5.5 14 L9 8.5 L12.5 14" stroke="#fff" stroke-width="2" fill="none"/></svg><svg style="position:absolute;left:43px;top:953px;" width="16" height="16" viewBox="0 0 16 16"><path d="M8.5 3.2 A5 5 0 1 0 9.5 12.5" stroke="#303020" stroke-width="4.4" fill="none"/><path d="M8.5 3.2 A5 5 0 1 0 9.5 12.5" stroke="#F4E440" stroke-width="2.6" fill="none"/><path d="M6.5 2.5 L11 0.3 L12.5 6Z" fill="#F4E440" stroke="#303020" stroke-width=".7"/><path d="M5.5 8.5 L9 14 L12.5 8.5" stroke="#202020" stroke-width="3.6" fill="none"/><path d="M5.5 8.5 L9 14 L12.5 8.5" stroke="#fff" stroke-width="2" fill="none"/></svg><svg style="position:absolute;left:66px;top:953px;" width="16" height="16" viewBox="0 0 16 16"><path d="M8.5 3.2 A5 5 0 1 0 9.5 12.5" stroke="#303020" stroke-width="4.4" fill="none"/><path d="M8.5 3.2 A5 5 0 1 0 9.5 12.5" stroke="#F4E440" stroke-width="2.6" fill="none"/><path d="M6.5 2.5 L11 0.3 L12.5 6Z" fill="#F4E440" stroke="#303020" stroke-width=".7"/><path d="M13 8 L8 11 L13 14" stroke="#202020" stroke-width="3.6" fill="none"/><path d="M13 8 L8 11 L13 14" stroke="#fff" stroke-width="2" fill="none"/></svg><svg style="position:absolute;left:89px;top:953px;" width="16" height="16" viewBox="0 0 16 16"><path d="M8.5 3.2 A5 5 0 1 0 9.5 12.5" stroke="#303020" stroke-width="4.4" fill="none"/><path d="M8.5 3.2 A5 5 0 1 0 9.5 12.5" stroke="#F4E440" stroke-width="2.6" fill="none"/><path d="M6.5 2.5 L11 0.3 L12.5 6Z" fill="#F4E440" stroke="#303020" stroke-width=".7"/><path d="M7 8 L12 11 L7 14" stroke="#202020" stroke-width="3.6" fill="none"/><path d="M7 8 L12 11 L7 14" stroke="#fff" stroke-width="2" fill="none"/></svg><div class="t" style="left:129px;top:955px;height:13px;line-height:13px;font-size:10.75px;color:#000;">Edit Layout Details</div><div class="t" style="left:244px;top:955px;height:13px;line-height:13px;font-size:10.75px;color:#000;">Edit Layout In Dreamweaver</div><div class="t" style="left:407px;top:955px;height:13px;line-height:13px;font-size:10.75px;color:#808080;text-shadow:1px 1px #fff;">Apply</div><div class="t" style="left:461px;top:955px;height:13px;line-height:13px;font-size:10.75px;color:#808080;text-shadow:1px 1px #fff;">Cancel</div><div class="t" style="left:518px;top:955px;height:13px;line-height:13px;font-size:10.75px;color:#808080;text-shadow:1px 1px #fff;">OK</div><div style="left:6px;top:976px;width:929px;height:1px;background:#fff;"></div><div style="left:4px;top:977px;width:2px;height:24px;background:#484848;"></div><div style="left:6px;top:977px;width:929px;height:24px;background:#E8E6E0;border-top:1px solid #E8E6E0;"></div><div style="left:6px;top:978px;width:929px;height:1px;background:#000;"></div><div style="left:6px;top:1001px;width:929px;height:1px;background:#fff;"></div><svg style="position:absolute;left:16px;top:981px;" width="14" height="14" viewBox="0 0 14 14"><rect x=".5" y=".5" width="13" height="13" fill="#fff" stroke="#000"/><path d="M2.5 3.5h3M2.5 6.5h3M2.5 8.5h9M2.5 10.5h9" stroke="#000" stroke-width="1"/><rect x="8" y="2.5" width="4" height="4" fill="#80D000"/></svg><div class="t" style="left:34px;top:982px;height:13px;line-height:13px;font-size:10.6px;color:#404040;">Component Details - Monitor</div><div style="left:174px;top:977px;width:232px;height:21px;background:#D4D0C8;border-right:1px solid #000;border-bottom:1px solid #000;"></div><svg style="position:absolute;left:179px;top:980px;" width="16" height="16" viewBox="0 0 16 16"><circle cx="7" cy="8" r="6.5" fill="#F0E000" stroke="#404000" stroke-width=".8"/><path d="M7 8 Q9 8 9 6 Q8 3 5 4 Q2 6 4 10 Q7 13 10 11 Q13 8 12 5" stroke="#404000" stroke-width="1.2" fill="none"/></svg><div class="t" style="left:197px;top:982px;height:13px;line-height:13px;font-size:10.6px;">Layout Code  - Customised Product Details</div><div style="left:1278px;top:90px;width:2px;height:915px;background:#404040;"></div><div style="left:1276px;top:94px;width:1px;height:884px;background:#fff;"></div><div style="left:937px;top:98px;width:336px;height:16px;border:1px solid #808080;"></div><div class="t" style="left:939px;top:100px;height:14px;line-height:14px;font-weight:bold;font-size:11.8px;">Design Tree</div><svg style="position:absolute;left:1247px;top:100px;" width="10" height="12" viewBox="0 0 10 12"><path d="M2.5 1.5h5v6h-5z" fill="#fff" stroke="#000"/><path d="M1 8h8" stroke="#000" stroke-width="1.5"/><path d="M5 8v4" stroke="#000" stroke-width="1.5"/><path d="M3 1h2v6H3z" fill="#000"/></svg><svg style="position:absolute;left:1261px;top:101px;" width="9" height="9" viewBox="0 0 9 9"><path d="M1 1L8 8M8 1L1 8" stroke="#000" stroke-width="1.1"/></svg><div style="left:937px;top:116px;width:339px;height:861px;border-top:2px solid #484848;border-left:3px solid #484848;"></div><div style="left:940px;top:118px;width:333px;height:28px;background:#DCD9D2;"></div><div style="left:943px;top:123px;width:3px;height:17px;background:repeating-linear-gradient(to bottom,#808080 0 1px,#fff 1px 2px,transparent 2px 3px);"></div><svg style="position:absolute;left:951px;top:124px;" width="15" height="15" viewBox="0 0 15 15"><circle cx="7" cy="7" r="6" fill="#F0F8F0" stroke="#404040" stroke-width=".8"/><path d="M4 10 L9 3" stroke="#90C060" stroke-width="2"/><circle cx="11" cy="6" r="2" fill="#F05030"/><circle cx="11" cy="11" r="2" fill="#30D030"/></svg><div style="left:970px;top:120px;width:23px;height:23px;border:1px solid #000080;background:#E0DEE8;"></div><svg style="position:absolute;left:974px;top:124px;" width="15" height="15" viewBox="0 0 15 15"><circle cx="7" cy="7" r="6" fill="#fff" stroke="#000" stroke-width="1"/><circle cx="7" cy="7" r="4.6" fill="none" stroke="#E8188C" stroke-width="1.6"/><circle cx="12" cy="6" r="2" fill="#F02010"/><circle cx="12" cy="11" r="2" fill="#20E020"/></svg><div style="left:992px;top:120px;width:24px;height:23px;border:1px solid #000080;background:#E0DEE8;"></div><svg style="position:absolute;left:996px;top:123px;" width="16" height="17" viewBox="0 0 16 17"><rect x=".5" y=".5" width="8" height="8" fill="#fff" stroke="#A0B0A0"/><path d="M2 4.5h5M4.5 2v5" stroke="#000" stroke-width="1.2"/><rect x="7.5" y="8.5" width="8" height="8" fill="#E8E8E8" stroke="#B0B0A0"/><path d="M9 12.5h5" stroke="#000" stroke-width="1.2"/></svg><div style="left:939px;top:146px;width:334px;height:829px;border-top:1px solid #404040;border-left:1px solid #808080;"></div><div style="left:941px;top:147px;width:329px;height:810px;background:#fff;"></div><div style="left:941px;top:147px;width:329px;height:810px;overflow:hidden;"><div style="left:-941px;top:-147px;width:1280px;height:1024px;"><div style="left:951px;top:171px;width:10px;height:1px;border-top:1px dotted #808080;"></div><div style="left:951px;top:187px;width:10px;height:1px;border-top:1px dotted #808080;"></div><div style="left:970px;top:195px;width:1px;height:8px;border-left:1px dotted #808080;"></div><div style="left:970px;top:203px;width:10px;height:1px;border-top:1px dotted #808080;"></div><div style="left:989px;top:211px;width:1px;height:312px;border-left:1px dotted #808080;"></div><div style="left:989px;top:219px;width:10px;height:1px;border-top:1px dotted #808080;"></div><div style="left:989px;top:235px;width:10px;height:1px;border-top:1px dotted #808080;"></div><div style="left:989px;top:251px;width:10px;height:1px;border-top:1px dotted #808080;"></div><div style="left:989px;top:267px;width:10px;height:1px;border-top:1px dotted #808080;"></div><div style="left:989px;top:283px;width:10px;height:1px;border-top:1px dotted #808080;"></div><div style="left:1008px;top:291px;width:1px;height:8px;border-left:1px dotted #808080;"></div><div style="left:1008px;top:299px;width:10px;height:1px;border-top:1px dotted #808080;"></div><div style="left:1027px;top:307px;width:1px;height:152px;border-left:1px dotted #808080;"></div><div style="left:1027px;top:315px;width:10px;height:1px;border-top:1px dotted #808080;"></div><div style="left:1027px;top:331px;width:10px;height:1px;border-top:1px dotted #808080;"></div><div style="left:1027px;top:347px;width:10px;height:1px;border-top:1px dotted #808080;"></div><div style="left:1027px;top:363px;width:10px;height:1px;border-top:1px dotted #808080;"></div><div style="left:1027px;top:379px;width:10px;height:1px;border-top:1px dotted #808080;"></div><div style="left:1027px;top:395px;width:10px;height:1px;border-top:1px dotted #808080;"></div><div style="left:1027px;top:411px;width:10px;height:1px;border-top:1px dotted #808080;"></div><div style="left:1027px;top:427px;width:10px;height:1px;border-top:1px dotted #808080;"></div><div style="left:1027px;top:443px;width:10px;height:1px;border-top:1px dotted #808080;"></div><div style="left:1027px;top:459px;width:10px;height:1px;border-top:1px dotted #808080;"></div><div style="left:1046px;top:467px;width:1px;height:8px;border-left:1px dotted #808080;"></div><div style="left:1046px;top:475px;width:10px;height:1px;border-top:1px dotted #808080;"></div><div style="left:1065px;top:483px;width:1px;height:8px;border-left:1px dotted #808080;"></div><div style="left:1065px;top:491px;width:10px;height:1px;border-top:1px dotted #808080;"></div><div style="left:1084px;top:499px;width:1px;height:8px;border-left:1px dotted #808080;"></div><div style="left:1084px;top:507px;width:19px;height:1px;border-top:1px dotted #808080;"></div><div style="left:989px;top:523px;width:10px;height:1px;border-top:1px dotted #808080;"></div><div style="left:951px;top:163px;width:1px;height:20px;border-left:1px dotted #808080;"></div><svg style="position:absolute;left:944px;top:148px;" width="15" height="15" viewBox="0 0 15 15"><path d="M0.8 7 L3.8 1 L10.2 1 L13.5 7 L10.2 13.5 L3.8 13.5Z" fill="#F0209C" stroke="#000" stroke-width="1.4"/><path d="M2 7 L7.5 7 L10 2 M7.5 7 L10 12.5" stroke="#600040" stroke-width=".9" fill="none"/></svg><div class="t" style="left:964px;top:148px;height:14px;line-height:14px;font-size:10.65px;">Receipt Page Layout</div><svg style="position:absolute;left:947px;top:167px;" width="9" height="9" viewBox="0 0 9 9"><rect x=".5" y=".5" width="8" height="8" fill="#fff" stroke="#505050" stroke-dasharray="1 1"/><path d="M2 4.5h5" stroke="#000"/><path d="M4.5 2v5" stroke="#000"/></svg><svg style="position:absolute;left:963px;top:164px;" width="15" height="15" viewBox="0 0 15 15"><circle cx="7.5" cy="7.5" r="6.6" fill="#fff" stroke="#000" stroke-width="1.5"/><circle cx="7.5" cy="7.5" r="5.6" fill="none" stroke="#FFD0E8" stroke-width=".8"/><path d="M9.8 4.3 A3.8 3.8 0 1 1 4.6 5" stroke="#F0209C" stroke-width="2" fill="none"/><path d="M3.5 3.2 L6.8 4.6 L4 7.2Z" fill="#F0209C"/></svg><div class="t" style="left:983px;top:164px;height:14px;line-height:14px;font-size:10.65px;">BaseHref</div><svg style="position:absolute;left:947px;top:183px;" width="9" height="9" viewBox="0 0 9 9"><rect x=".5" y=".5" width="8" height="8" fill="#fff" stroke="#505050" stroke-dasharray="1 1"/><path d="M2 4.5h5" stroke="#000"/></svg><svg style="position:absolute;left:963px;top:180px;" width="15" height="15" viewBox="0 0 15 15"><circle cx="7.5" cy="7.5" r="6.6" fill="#fff" stroke="#000" stroke-width="1.5"/><circle cx="7.5" cy="7.5" r="5.6" fill="none" stroke="#FFD0E8" stroke-width=".8"/><path d="M9.8 4.3 A3.8 3.8 0 1 1 4.6 5" stroke="#F0209C" stroke-width="2" fill="none"/><path d="M3.5 3.2 L6.8 4.6 L4 7.2Z" fill="#F0209C"/></svg><div class="t" style="left:983px;top:180px;height:14px;line-height:14px;font-size:10.65px;">INNERLAYOUT (ReceiptPageInnerLayout)</div><svg style="position:absolute;left:966px;top:199px;" width="9" height="9" viewBox="0 0 9 9"><rect x=".5" y=".5" width="8" height="8" fill="#fff" stroke="#505050" stroke-dasharray="1 1"/><path d="M2 4.5h5" stroke="#000"/></svg><svg style="position:absolute;left:982px;top:196px;" width="15" height="15" viewBox="0 0 15 15"><path d="M0.8 7 L3.8 1 L10.2 1 L13.5 7 L10.2 13.5 L3.8 13.5Z" fill="#F0209C" stroke="#000" stroke-width="1.4"/><path d="M2 7 L7.5 7 L10 2 M7.5 7 L10 12.5" stroke="#600040" stroke-width=".9" fill="none"/></svg><div class="t" style="left:1002px;top:196px;height:14px;line-height:14px;font-size:10.65px;">Receipt Page Bulk</div><svg style="position:absolute;left:985px;top:215px;" width="9" height="9" viewBox="0 0 9 9"><rect x=".5" y=".5" width="8" height="8" fill="#fff" stroke="#505050" stroke-dasharray="1 1"/><path d="M2 4.5h5" stroke="#000"/><path d="M4.5 2v5" stroke="#000"/></svg><svg style="position:absolute;left:1001px;top:212px;" width="15" height="15" viewBox="0 0 15 15"><circle cx="7.5" cy="7.5" r="6.6" fill="#fff" stroke="#000" stroke-width="1.5"/><circle cx="7.5" cy="7.5" r="5.6" fill="none" stroke="#FFD0E8" stroke-width=".8"/><path d="M9.8 4.3 A3.8 3.8 0 1 1 4.6 5" stroke="#F0209C" stroke-width="2" fill="none"/><path d="M3.5 3.2 L6.8 4.6 L4 7.2Z" fill="#F0209C"/></svg><div class="t" style="left:1021px;top:212px;height:14px;line-height:14px;font-size:10.65px;">OnlineScriptURL (Checkout Script URL)</div><svg style="position:absolute;left:985px;top:231px;" width="9" height="9" viewBox="0 0 9 9"><rect x=".5" y=".5" width="8" height="8" fill="#fff" stroke="#505050" stroke-dasharray="1 1"/><path d="M2 4.5h5" stroke="#000"/><path d="M4.5 2v5" stroke="#000"/></svg><svg style="position:absolute;left:1001px;top:228px;" width="15" height="15" viewBox="0 0 15 15"><circle cx="7.5" cy="7.5" r="6.6" fill="#fff" stroke="#000" stroke-width="1.5"/><circle cx="7.5" cy="7.5" r="5.6" fill="none" stroke="#FFD0E8" stroke-width=".8"/><path d="M9.8 4.3 A3.8 3.8 0 1 1 4.6 5" stroke="#F0209C" stroke-width="2" fill="none"/><path d="M3.5 3.2 L6.8 4.6 L4 7.2Z" fill="#F0209C"/></svg><div class="t" style="left:1021px;top:228px;height:14px;line-height:14px;font-size:10.65px;">CheckoutArea (Receipt Company Contact Information)</div><svg style="position:absolute;left:985px;top:247px;" width="9" height="9" viewBox="0 0 9 9"><rect x=".5" y=".5" width="8" height="8" fill="#fff" stroke="#505050" stroke-dasharray="1 1"/><path d="M2 4.5h5" stroke="#000"/><path d="M4.5 2v5" stroke="#000"/></svg><svg style="position:absolute;left:1001px;top:244px;" width="15" height="15" viewBox="0 0 15 15"><circle cx="7.5" cy="7.5" r="6.6" fill="#fff" stroke="#000" stroke-width="1.5"/><circle cx="7.5" cy="7.5" r="5.6" fill="none" stroke="#FFD0E8" stroke-width=".8"/><path d="M9.8 4.3 A3.8 3.8 0 1 1 4.6 5" stroke="#F0209C" stroke-width="2" fill="none"/><path d="M3.5 3.2 L6.8 4.6 L4 7.2Z" fill="#F0209C"/></svg><div class="t" style="left:1021px;top:244px;height:14px;line-height:14px;font-size:10.65px;">CheckoutArea (Receipt Customer Address)</div><svg style="position:absolute;left:985px;top:263px;" width="9" height="9" viewBox="0 0 9 9"><rect x=".5" y=".5" width="8" height="8" fill="#fff" stroke="#505050" stroke-dasharray="1 1"/><path d="M2 4.5h5" stroke="#000"/><path d="M4.5 2v5" stroke="#000"/></svg><svg style="position:absolute;left:1001px;top:260px;" width="15" height="15" viewBox="0 0 15 15"><circle cx="7.5" cy="7.5" r="6.6" fill="#fff" stroke="#000" stroke-width="1.5"/><circle cx="7.5" cy="7.5" r="5.6" fill="none" stroke="#FFD0E8" stroke-width=".8"/><path d="M9.8 4.3 A3.8 3.8 0 1 1 4.6 5" stroke="#F0209C" stroke-width="2" fill="none"/><path d="M3.5 3.2 L6.8 4.6 L4 7.2Z" fill="#F0209C"/></svg><div class="t" style="left:1021px;top:260px;height:14px;line-height:14px;font-size:10.65px;">CheckoutArea (Receipt Order Information)</div><svg style="position:absolute;left:985px;top:279px;" width="9" height="9" viewBox="0 0 9 9"><rect x=".5" y=".5" width="8" height="8" fill="#fff" stroke="#505050" stroke-dasharray="1 1"/><path d="M2 4.5h5" stroke="#000"/></svg><svg style="position:absolute;left:1001px;top:276px;" width="15" height="15" viewBox="0 0 15 15"><circle cx="7.5" cy="7.5" r="6.6" fill="#fff" stroke="#000" stroke-width="1.5"/><circle cx="7.5" cy="7.5" r="5.6" fill="none" stroke="#FFD0E8" stroke-width=".8"/><path d="M9.8 4.3 A3.8 3.8 0 1 1 4.6 5" stroke="#F0209C" stroke-width="2" fill="none"/><path d="M3.5 3.2 L6.8 4.6 L4 7.2Z" fill="#F0209C"/></svg><div class="t" style="left:1021px;top:276px;height:14px;line-height:14px;font-size:10.65px;">ShoppingCartGrid (Checkout Shopping Cart Grid)</div><svg style="position:absolute;left:1004px;top:295px;" width="9" height="9" viewBox="0 0 9 9"><rect x=".5" y=".5" width="8" height="8" fill="#fff" stroke="#505050" stroke-dasharray="1 1"/><path d="M2 4.5h5" stroke="#000"/></svg><svg style="position:absolute;left:1020px;top:292px;" width="15" height="15" viewBox="0 0 15 15"><path d="M0.8 7 L3.8 1 L10.2 1 L13.5 7 L10.2 13.5 L3.8 13.5Z" fill="#F0209C" stroke="#000" stroke-width="1.4"/><path d="M2 7 L7.5 7 L10 2 M7.5 7 L10 12.5" stroke="#600040" stroke-width=".9" fill="none"/></svg><div class="t" style="left:1040px;top:292px;height:14px;line-height:14px;font-size:10.65px;">Checkout Shopping Cart Grid</div><svg style="position:absolute;left:1023px;top:311px;" width="9" height="9" viewBox="0 0 9 9"><rect x=".5" y=".5" width="8" height="8" fill="#fff" stroke="#505050" stroke-dasharray="1 1"/><path d="M2 4.5h5" stroke="#000"/><path d="M4.5 2v5" stroke="#000"/></svg><svg style="position:absolute;left:1039px;top:308px;" width="15" height="15" viewBox="0 0 15 15"><circle cx="7.5" cy="7.5" r="6.6" fill="#fff" stroke="#000" stroke-width="1.5"/><circle cx="7.5" cy="7.5" r="5.6" fill="none" stroke="#FFD0E8" stroke-width=".8"/><path d="M9.8 4.3 A3.8 3.8 0 1 1 4.6 5" stroke="#F0209C" stroke-width="2" fill="none"/><path d="M3.5 3.2 L6.8 4.6 L4 7.2Z" fill="#F0209C"/></svg><div class="t" style="left:1059px;top:308px;height:14px;line-height:14px;font-size:10.65px;">OrderLineList</div><svg style="position:absolute;left:1023px;top:327px;" width="9" height="9" viewBox="0 0 9 9"><rect x=".5" y=".5" width="8" height="8" fill="#fff" stroke="#505050" stroke-dasharray="1 1"/><path d="M2 4.5h5" stroke="#000"/><path d="M4.5 2v5" stroke="#000"/></svg><svg style="position:absolute;left:1039px;top:324px;" width="15" height="15" viewBox="0 0 15 15"><circle cx="7.5" cy="7.5" r="6.6" fill="#fff" stroke="#000" stroke-width="1.5"/><circle cx="7.5" cy="7.5" r="5.6" fill="none" stroke="#FFD0E8" stroke-width=".8"/><path d="M9.8 4.3 A3.8 3.8 0 1 1 4.6 5" stroke="#F0209C" stroke-width="2" fill="none"/><path d="M3.5 3.2 L6.8 4.6 L4 7.2Z" fill="#F0209C"/></svg><div class="t" style="left:1059px;top:324px;height:14px;line-height:14px;font-size:10.65px;">CartTableRow (Empty Cart Message Row)</div><svg style="position:absolute;left:1023px;top:343px;" width="9" height="9" viewBox="0 0 9 9"><rect x=".5" y=".5" width="8" height="8" fill="#fff" stroke="#505050" stroke-dasharray="1 1"/><path d="M2 4.5h5" stroke="#000"/><path d="M4.5 2v5" stroke="#000"/></svg><svg style="position:absolute;left:1039px;top:340px;" width="15" height="15" viewBox="0 0 15 15"><circle cx="7.5" cy="7.5" r="6.6" fill="#fff" stroke="#000" stroke-width="1.5"/><circle cx="7.5" cy="7.5" r="5.6" fill="none" stroke="#FFD0E8" stroke-width=".8"/><path d="M9.8 4.3 A3.8 3.8 0 1 1 4.6 5" stroke="#F0209C" stroke-width="2" fill="none"/><path d="M3.5 3.2 L6.8 4.6 L4 7.2Z" fill="#F0209C"/></svg><div class="t" style="left:1059px;top:340px;height:14px;line-height:14px;font-size:10.65px;">CartTableRow (Sub Total Row)</div><svg style="position:absolute;left:1023px;top:359px;" width="9" height="9" viewBox="0 0 9 9"><rect x=".5" y=".5" width="8" height="8" fill="#fff" stroke="#505050" stroke-dasharray="1 1"/><path d="M2 4.5h5" stroke="#000"/><path d="M4.5 2v5" stroke="#000"/></svg><svg style="position:absolute;left:1039px;top:356px;" width="15" height="15" viewBox="0 0 15 15"><circle cx="7.5" cy="7.5" r="6.6" fill="#fff" stroke="#000" stroke-width="1.5"/><circle cx="7.5" cy="7.5" r="5.6" fill="none" stroke="#FFD0E8" stroke-width=".8"/><path d="M9.8 4.3 A3.8 3.8 0 1 1 4.6 5" stroke="#F0209C" stroke-width="2" fill="none"/><path d="M3.5 3.2 L6.8 4.6 L4 7.2Z" fill="#F0209C"/></svg><div class="t" style="left:1059px;top:356px;height:14px;line-height:14px;font-size:10.65px;">ShoppingCartAdjustmentList</div><svg style="position:absolute;left:1023px;top:375px;" width="9" height="9" viewBox="0 0 9 9"><rect x=".5" y=".5" width="8" height="8" fill="#fff" stroke="#505050" stroke-dasharray="1 1"/><path d="M2 4.5h5" stroke="#000"/><path d="M4.5 2v5" stroke="#000"/></svg><svg style="position:absolute;left:1039px;top:372px;" width="15" height="15" viewBox="0 0 15 15"><circle cx="7.5" cy="7.5" r="6.6" fill="#fff" stroke="#000" stroke-width="1.5"/><circle cx="7.5" cy="7.5" r="5.6" fill="none" stroke="#FFD0E8" stroke-width=".8"/><path d="M9.8 4.3 A3.8 3.8 0 1 1 4.6 5" stroke="#F0209C" stroke-width="2" fill="none"/><path d="M3.5 3.2 L6.8 4.6 L4 7.2Z" fill="#F0209C"/></svg><div class="t" style="left:1059px;top:372px;height:14px;line-height:14px;font-size:10.65px;">CartTableRow (Shipping Charge Row)</div><svg style="position:absolute;left:1023px;top:391px;" width="9" height="9" viewBox="0 0 9 9"><rect x=".5" y=".5" width="8" height="8" fill="#fff" stroke="#505050" stroke-dasharray="1 1"/><path d="M2 4.5h5" stroke="#000"/><path d="M4.5 2v5" stroke="#000"/></svg><svg style="position:absolute;left:1039px;top:388px;" width="15" height="15" viewBox="0 0 15 15"><circle cx="7.5" cy="7.5" r="6.6" fill="#fff" stroke="#000" stroke-width="1.5"/><circle cx="7.5" cy="7.5" r="5.6" fill="none" stroke="#FFD0E8" stroke-width=".8"/><path d="M9.8 4.3 A3.8 3.8 0 1 1 4.6 5" stroke="#F0209C" stroke-width="2" fill="none"/><path d="M3.5 3.2 L6.8 4.6 L4 7.2Z" fill="#F0209C"/></svg><div class="t" style="left:1059px;top:388px;height:14px;line-height:14px;font-size:10.65px;">CartTableRow (Handling Charge Row)</div><svg style="position:absolute;left:1023px;top:407px;" width="9" height="9" viewBox="0 0 9 9"><rect x=".5" y=".5" width="8" height="8" fill="#fff" stroke="#505050" stroke-dasharray="1 1"/><path d="M2 4.5h5" stroke="#000"/><path d="M4.5 2v5" stroke="#000"/></svg><svg style="position:absolute;left:1039px;top:404px;" width="15" height="15" viewBox="0 0 15 15"><circle cx="7.5" cy="7.5" r="6.6" fill="#fff" stroke="#000" stroke-width="1.5"/><circle cx="7.5" cy="7.5" r="5.6" fill="none" stroke="#FFD0E8" stroke-width=".8"/><path d="M9.8 4.3 A3.8 3.8 0 1 1 4.6 5" stroke="#F0209C" stroke-width="2" fill="none"/><path d="M3.5 3.2 L6.8 4.6 L4 7.2Z" fill="#F0209C"/></svg><div class="t" style="left:1059px;top:404px;height:14px;line-height:14px;font-size:10.65px;">CartTableRow (Tax 1 Row)</div><svg style="position:absolute;left:1023px;top:423px;" width="9" height="9" viewBox="0 0 9 9"><rect x=".5" y=".5" width="8" height="8" fill="#fff" stroke="#505050" stroke-dasharray="1 1"/><path d="M2 4.5h5" stroke="#000"/><path d="M4.5 2v5" stroke="#000"/></svg><svg style="position:absolute;left:1039px;top:420px;" width="15" height="15" viewBox="0 0 15 15"><circle cx="7.5" cy="7.5" r="6.6" fill="#fff" stroke="#000" stroke-width="1.5"/><circle cx="7.5" cy="7.5" r="5.6" fill="none" stroke="#FFD0E8" stroke-width=".8"/><path d="M9.8 4.3 A3.8 3.8 0 1 1 4.6 5" stroke="#F0209C" stroke-width="2" fill="none"/><path d="M3.5 3.2 L6.8 4.6 L4 7.2Z" fill="#F0209C"/></svg><div class="t" style="left:1059px;top:420px;height:14px;line-height:14px;font-size:10.65px;">CartTableRow (Tax 2 Row)</div><svg style="position:absolute;left:1023px;top:439px;" width="9" height="9" viewBox="0 0 9 9"><rect x=".5" y=".5" width="8" height="8" fill="#fff" stroke="#505050" stroke-dasharray="1 1"/><path d="M2 4.5h5" stroke="#000"/><path d="M4.5 2v5" stroke="#000"/></svg><svg style="position:absolute;left:1039px;top:436px;" width="15" height="15" viewBox="0 0 15 15"><circle cx="7.5" cy="7.5" r="6.6" fill="#fff" stroke="#000" stroke-width="1.5"/><circle cx="7.5" cy="7.5" r="5.6" fill="none" stroke="#FFD0E8" stroke-width=".8"/><path d="M9.8 4.3 A3.8 3.8 0 1 1 4.6 5" stroke="#F0209C" stroke-width="2" fill="none"/><path d="M3.5 3.2 L6.8 4.6 L4 7.2Z" fill="#F0209C"/></svg><div class="t" style="left:1059px;top:436px;height:14px;line-height:14px;font-size:10.65px;">CartTableRow (Total Row)</div><svg style="position:absolute;left:1023px;top:455px;" width="9" height="9" viewBox="0 0 9 9"><rect x=".5" y=".5" width="8" height="8" fill="#fff" stroke="#505050" stroke-dasharray="1 1"/><path d="M2 4.5h5" stroke="#000"/></svg><svg style="position:absolute;left:1039px;top:452px;" width="15" height="15" viewBox="0 0 15 15"><circle cx="7.5" cy="7.5" r="6.6" fill="#fff" stroke="#000" stroke-width="1.5"/><circle cx="7.5" cy="7.5" r="5.6" fill="none" stroke="#FFD0E8" stroke-width=".8"/><path d="M9.8 4.3 A3.8 3.8 0 1 1 4.6 5" stroke="#F0209C" stroke-width="2" fill="none"/><path d="M3.5 3.2 L6.8 4.6 L4 7.2Z" fill="#F0209C"/></svg><div class="t" style="left:1059px;top:452px;height:14px;line-height:14px;font-size:10.65px;">OrderLineList (New Order Line List)</div><svg style="position:absolute;left:1042px;top:471px;" width="9" height="9" viewBox="0 0 9 9"><rect x=".5" y=".5" width="8" height="8" fill="#fff" stroke="#505050" stroke-dasharray="1 1"/><path d="M2 4.5h5" stroke="#000"/></svg><svg style="position:absolute;left:1058px;top:468px;" width="15" height="15" viewBox="0 0 15 15"><rect x=".5" y=".5" width="14" height="14" fill="#fff" stroke="#000"/><path d="M5 0v15M10 0v15M0 5h15M0 10h15" stroke="#000"/><rect x="1" y="1" width="4" height="13" fill="#E8188C"/><path d="M0 5h5M0 10h5" stroke="#000"/></svg><div class="t" style="left:1078px;top:468px;height:14px;line-height:14px;font-size:10.65px;">New Order Line List</div><svg style="position:absolute;left:1061px;top:487px;" width="9" height="9" viewBox="0 0 9 9"><rect x=".5" y=".5" width="8" height="8" fill="#fff" stroke="#505050" stroke-dasharray="1 1"/><path d="M2 4.5h5" stroke="#000"/></svg><svg style="position:absolute;left:1077px;top:484px;" width="15" height="15" viewBox="0 0 15 15"><circle cx="7.5" cy="7.5" r="6.6" fill="#fff" stroke="#000" stroke-width="1.5"/><circle cx="7.5" cy="7.5" r="5.6" fill="none" stroke="#FFD0E8" stroke-width=".8"/><path d="M9.8 4.3 A3.8 3.8 0 1 1 4.6 5" stroke="#F0209C" stroke-width="2" fill="none"/><path d="M3.5 3.2 L6.8 4.6 L4 7.2Z" fill="#F0209C"/></svg><div class="t" style="left:1097px;top:484px;height:14px;line-height:14px;font-size:10.65px;">CartProductDetails (Customised Product Details)</div><svg style="position:absolute;left:1096px;top:500px;" width="15" height="15" viewBox="0 0 15 15"><path d="M0.8 7 L3.8 1 L10.2 1 L13.5 7 L10.2 13.5 L3.8 13.5Z" fill="#F0209C" stroke="#000" stroke-width="1.4"/><path d="M2 7 L7.5 7 L10 2 M7.5 7 L10 12.5" stroke="#600040" stroke-width=".9" fill="none"/></svg><div style="left:1114px;top:499px;width:138px;height:16px;background:#0A246A;border:1px dotted #fff;"></div><div class="t" style="left:1116px;top:500px;height:14px;line-height:14px;color:#fff;font-size:10.65px;">Customised Product Details</div><svg style="position:absolute;left:985px;top:519px;" width="9" height="9" viewBox="0 0 9 9"><rect x=".5" y=".5" width="8" height="8" fill="#fff" stroke="#505050" stroke-dasharray="1 1"/><path d="M2 4.5h5" stroke="#000"/><path d="M4.5 2v5" stroke="#000"/></svg><svg style="position:absolute;left:1001px;top:516px;" width="15" height="15" viewBox="0 0 15 15"><circle cx="7.5" cy="7.5" r="6.6" fill="#fff" stroke="#000" stroke-width="1.5"/><circle cx="7.5" cy="7.5" r="5.6" fill="none" stroke="#FFD0E8" stroke-width=".8"/><path d="M9.8 4.3 A3.8 3.8 0 1 1 4.6 5" stroke="#F0209C" stroke-width="2" fill="none"/><path d="M3.5 3.2 L6.8 4.6 L4 7.2Z" fill="#F0209C"/></svg><div class="t" style="left:1021px;top:516px;height:14px;line-height:14px;font-size:10.65px;">CheckoutButtons (Checkout Done Button)</div></div></div><div style="left:1270px;top:147px;width:3px;height:810px;background:#D4D0C8;"></div><div style="left:942px;top:957px;width:328px;height:15px;background:repeating-conic-gradient(#fff 0 25%,#D4D0C8 0 50%) 0 0/2px 2px;"></div><div style="left:942px;top:957px;width:16px;height:15px;background:#D4D0C8;box-shadow:inset -1px -1px #404040, inset 1px 1px #FFFFFF, inset -2px -2px #808080, inset 2px 2px #D4D0C8;"><svg style="position:absolute;left:0px;top:0px;" width="16" height="15" viewBox="0 0 16 15"><path d="M5 7.5L9 4V11z" fill="#000"/></svg></div><div style="left:971px;top:957px;width:237px;height:15px;background:#D4D0C8;box-shadow:inset -1px -1px #404040, inset 1px 1px #FFFFFF, inset -2px -2px #808080, inset 2px 2px #D4D0C8;"></div><div style="left:1254px;top:957px;width:16px;height:15px;background:#D4D0C8;box-shadow:inset -1px -1px #404040, inset 1px 1px #FFFFFF, inset -2px -2px #808080, inset 2px 2px #D4D0C8;"><svg style="position:absolute;left:0px;top:0px;" width="16" height="15" viewBox="0 0 16 15"><path d="M11 7.5L7 4V11z" fill="#000"/></svg></div><div style="left:937px;top:977px;width:339px;height:24px;background:#E8E6E0;"></div><div style="left:937px;top:978px;width:337px;height:1px;background:#000;"></div><div style="left:937px;top:1001px;width:339px;height:1px;background:#fff;"></div><svg style="position:absolute;left:947px;top:981px;" width="14" height="14" viewBox="0 0 14 14"><rect x=".5" y=".5" width="13" height="13" fill="#fff" stroke="#000"/><path d="M2.5 3.5h3M2.5 6.5h3M2.5 8.5h9M2.5 10.5h9" stroke="#000" stroke-width="1"/><rect x="8" y="2.5" width="4" height="4" fill="#80D000"/></svg><div class="t" style="left:964px;top:982px;height:13px;line-height:13px;font-size:11px;color:#404040;">Content Tree</div><div style="left:1033px;top:977px;width:85px;height:21px;background:#D4D0C8;border-right:1px solid #000;border-bottom:1px solid #000;"></div><svg style="position:absolute;left:1038px;top:980px;" width="16" height="16" viewBox="0 0 16 16"><circle cx="7" cy="8" r="6.5" fill="#F0E000" stroke="#404000" stroke-width=".8"/><path d="M7 8 Q9 8 9 6 Q8 3 5 4 Q2 6 4 10 Q7 13 10 11 Q13 8 12 5" stroke="#404000" stroke-width="1.2" fill="none"/></svg><div class="t" style="left:1056px;top:982px;height:13px;line-height:13px;font-size:10.5px;">Design Tree</div><div style="left:1152px;top:964px;width:91px;height:23px;background:#CDD0EA;border:1px solid #7078A8;border-top-color:#A8B0D0;border-left-color:#A8B0D0;border-radius:2px;box-shadow:inset 1px 1px #E8EAF8;"></div><svg style="position:absolute;left:1157px;top:967px;" width="18" height="18" viewBox="0 0 18 18"><rect x="1.5" y="1.5" width="12" height="12" fill="#F4F4FC" stroke="#8088A0"/><text x="4" y="11.5" font-size="10" font-weight="bold" fill="#303090" font-family="Liberation Sans">F</text><circle cx="12" cy="12.5" r="3.8" fill="#fff" stroke="#E02020" stroke-width="1.6"/><path d="M9.5 10L14.5 15" stroke="#E02020" stroke-width="1.6"/></svg><div class="t" style="left:1177px;top:968px;height:15px;line-height:15px;font-size:10.5px;color:#000;">F Lock: OFF</div><div style="left:0px;top:1004px;width:1280px;height:2px;background:#505050;"></div><div class="t" style="left:2px;top:1009px;height:13px;line-height:13px;font-size:10.5px;">For Help, press F1</div><div style="left:1075px;top:1008px;width:106px;height:16px;border-top:1px solid #808080;border-left:1px solid #808080;border-right:1px solid #fff;"></div><div style="left:1191px;top:1008px;width:26px;height:16px;border-top:1px solid #808080;border-left:1px solid #808080;border-right:1px solid #fff;"></div><div style="left:1219px;top:1008px;width:28px;height:16px;border-top:1px solid #808080;border-left:1px solid #808080;border-right:1px solid #fff;"></div><div style="left:1249px;top:1008px;width:31px;height:16px;border-top:1px solid #808080;border-left:1px solid #808080;border-right:1px solid #fff;"></div></body></html>
